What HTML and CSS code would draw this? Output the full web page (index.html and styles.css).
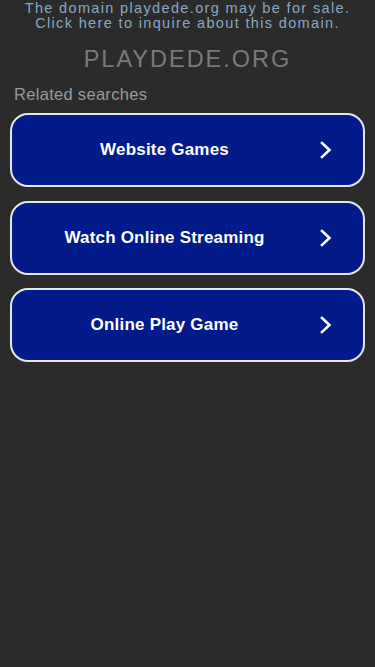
FILE: index.html
```html
<!DOCTYPE html>
<html>
  <head>
    <meta charset="UTF-8">
    <title>playdede.org</title>
    <link rel="stylesheet" href="styles.css">
  </head>
  <body>
    <div class="page">
      <a class="sale" href="#">The domain playdede.org may be for sale.<br>Click here to inquire about this domain.</a>
      <h1 class="domain">PLAYDEDE.ORG</h1>
      <p class="related">Related searches</p>
      <div class="links">
        <a class="link-btn" href="#"><span class="label">Website Games</span><span class="arrow"><svg width="12" height="18" viewBox="0 0 12 18"><path d="M2 2 L9.5 9 L2 16" fill="none" stroke="#fff" stroke-width="2.6" stroke-linecap="square"/></svg></span></a>
        <a class="link-btn" href="#"><span class="label">Watch Online Streaming</span><span class="arrow"><svg width="12" height="18" viewBox="0 0 12 18"><path d="M2 2 L9.5 9 L2 16" fill="none" stroke="#fff" stroke-width="2.6" stroke-linecap="square"/></svg></span></a>
        <a class="link-btn" href="#"><span class="label">Online Play Game</span><span class="arrow"><svg width="12" height="18" viewBox="0 0 12 18"><path d="M2 2 L9.5 9 L2 16" fill="none" stroke="#fff" stroke-width="2.6" stroke-linecap="square"/></svg></span></a>
      </div>
    </div>
  </body>
</html>
```

FILE: styles.css
```css
*, ::after, ::before {
  box-sizing: border-box;
}

html, body {
  margin: 0;
  padding: 0;
  background: #2b2b2b;
  font-family: "Liberation Sans", Arial, Helvetica, sans-serif;
  min-height: 100%;
}

.page {
  padding: 0 10px;
}

.sale {
  display: block;
  text-align: center;
  color: #8ba8c2;
  font-size: 14.5px;
  line-height: 15px;
  letter-spacing: 1.35px;
  text-decoration: none;
  padding-top: 1px;
}

.domain {
  margin: 15px 0 0;
  text-align: center;
  color: #7a7a7a;
  font-weight: normal;
  font-size: 23.5px;
  line-height: 26px;
  letter-spacing: 2px;
}

.related {
  margin: 13px 0 0 4px;
  color: #9a9a9a;
  font-size: 16.5px;
  line-height: 18px;
  letter-spacing: 0.3px;
}

.links {
  display: flex;
  flex-direction: column;
  gap: 13.5px;
  margin-top: 10px;
}

.link-btn {
  display: flex;
  align-items: center;
  height: 74px;
  background: #021a8a;
  border: 2px solid #e6e6e6;
  border-radius: 18px;
  color: #fff;
  text-decoration: none;
}

.label {
  flex: 1;
  text-align: center;
  font-weight: bold;
  font-size: 17px;
  letter-spacing: 0.2px;
}

.arrow {
  width: 46px;
  display: flex;
  align-items: center;
  padding-left: 3px;
}
```
